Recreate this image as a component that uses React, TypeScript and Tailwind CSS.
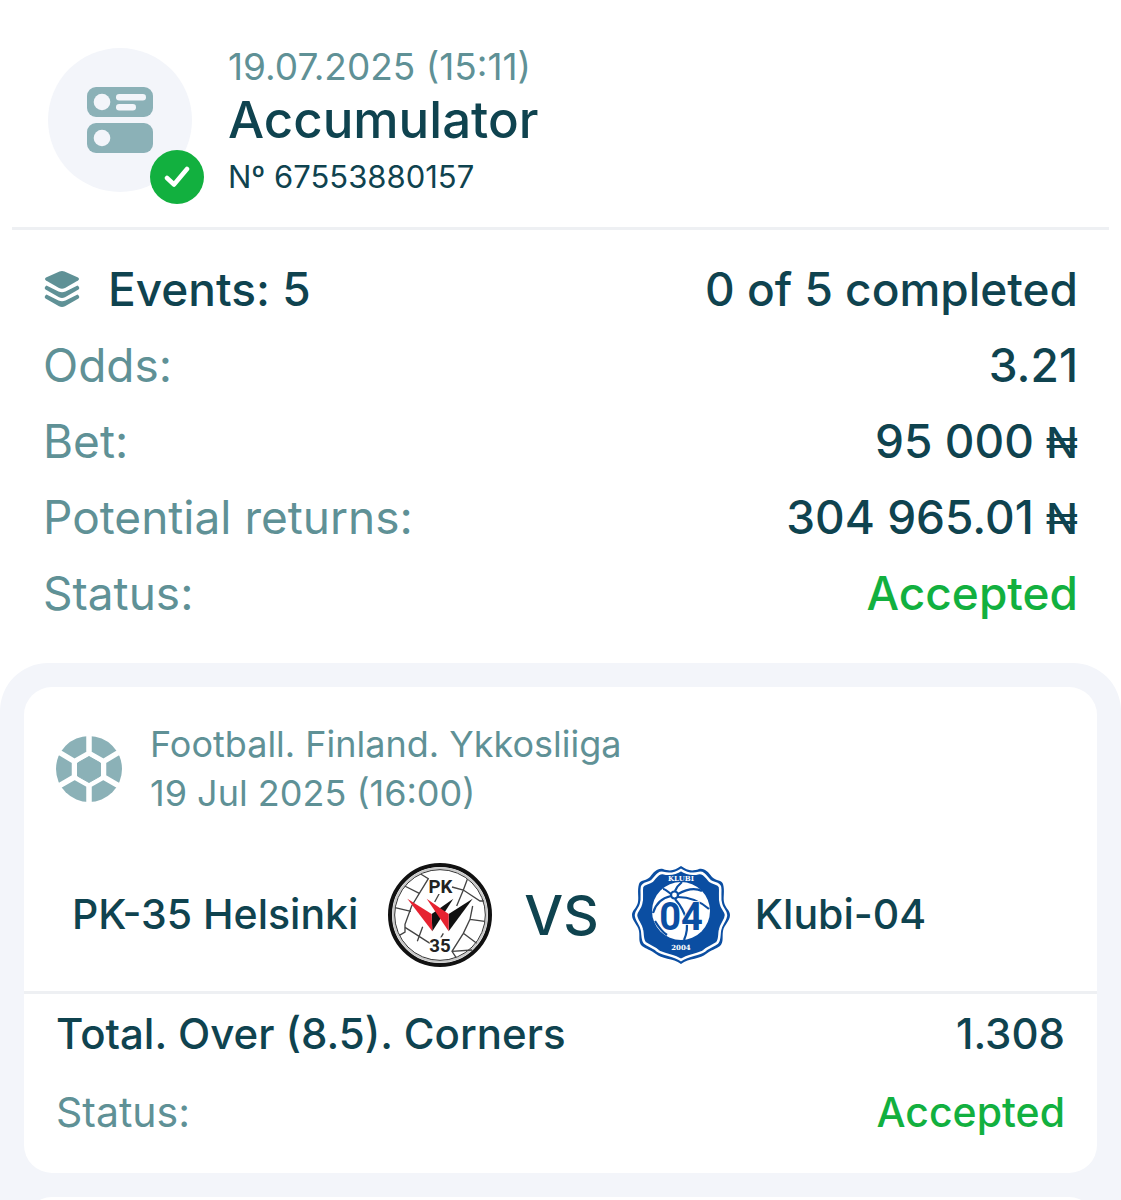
import type { ReactNode } from "react";

type RowProps = {
  label: ReactNode;
  value: ReactNode;
  accent?: boolean;
};

function SummaryRow({ label, value, accent }: RowProps) {
  return (
    <div className="flex items-center justify-between text-[46px] leading-[76px]">
      <dt className="text-[#5f9196]">{label}</dt>
      <dd
        className={
          accent ? "font-medium text-[#12b03f]" : "font-medium text-[#0f434f]"
        }
      >
        {value}
      </dd>
    </div>
  );
}

function Money({ amount }: { amount: string }) {
  return (
    <span className="flex items-baseline gap-3">
      {amount}
      <span className="text-[42px] leading-none">₦</span>
    </span>
  );
}

function CouponIcon() {
  return (
    <svg viewBox="0 0 66 66" className="size-[66px]" aria-hidden="true">
      <rect width="66" height="30" rx="9" fill="#8bb1b7" />
      <rect y="36" width="66" height="30" rx="9" fill="#8bb1b7" />
      <g fill="#f3f5fa">
        <circle cx="15" cy="15" r="8.3" />
        <circle cx="15" cy="51" r="8.3" />
        <rect x="29" y="7" width="30" height="6.5" rx="3.2" />
        <rect x="29" y="17" width="20" height="6.5" rx="3.2" />
      </g>
    </svg>
  );
}

function StackIcon() {
  return (
    <svg
      viewBox="0 0 36 38"
      className="h-[38px] w-9"
      fill="#5f9196"
      aria-hidden="true"
    >
      <path d="M15.5 1.500Q18 .4 20.500 1.500L34 7.500Q36 9 34 10.500L21 18Q18 19.500 15 18L2 10.500Q0 9 2 7.500Z" />
      <path d="M2.500 15.500L14.500 21.500Q18 23 21.500 21.500L33.500 15.500Q36.500 17.500 34.500 19.500L21 27.300Q18 28.800 15 27.300L1.500 19.500Q-.5 17.500 2.500 15.500Z" />
      <path d="M2.500 24.500L14.500 30.500Q18 32 21.500 30.500L33.500 24.500Q36.500 26.500 34.500 28.500L21 36.300Q18 37.800 15 36.300L1.500 28.500Q-.5 26.500 2.500 24.500Z" />
    </svg>
  );
}

function FootballIcon() {
  return (
    <svg
      viewBox="0 0 66 66"
      className="size-[66px] shrink-0"
      aria-hidden="true"
    >
      <circle cx="33" cy="33" r="33" fill="#8bb1b7" />
      <path
        d="M33 17.500L47.500 25.500V41L33 49L18.500 41V25.500ZM33 17.500V-1M47.500 25.500L65 15M47.500 41L65 51M33 49V67M18.500 41L1 51M18.500 25.500L1 15"
        fill="none"
        stroke="#fff"
        strokeWidth="5.500"
      />
      <path
        d="M33 20.500L44.500 27V40L33 46.500L21.500 40V27Z"
        fill="#8bb1b7"
        stroke="#8bb1b7"
        strokeWidth="1"
        strokeLinejoin="round"
      />
    </svg>
  );
}

function PkLogo() {
  return (
    <svg
      viewBox="24 21 312 312"
      className="size-[104px] shrink-0"
      role="img"
      aria-label="PK-35"
    >
      <circle cx="180" cy="177" r="150" fill="#fff" stroke="#111" strokeWidth="12" />
      <circle cx="180" cy="177" r="140" fill="none" stroke="#c9c9c9" strokeWidth="6" />
      <circle cx="180" cy="177" r="136" fill="none" stroke="#333" strokeWidth="3" />
      <g fill="none" stroke="#444" strokeWidth="4">
        <path d="M122 54L145 68L118 112L95 150L75 205V228L58 238" />
        <path d="M74 90L118 112M45 155L93 166M75 214L100 230L150 262M128 212L112 256" />
        <path d="M216 93L250 102L300 135H312M250 102L262 70M250 102L230 150M182 105L164 138" />
        <path d="M278 150L270 190L250 232L216 286L228 304M270 190L314 196M250 232L290 262M216 286L276 282M190 232L176 256" />
      </g>
      <path d="M220 128L155 174L157 226Z" fill="#111" />
      <path d="M278 128L206 174V226Z" fill="#111" />
      <path d="M82 128L155 174L157 226Z" fill="#e62230" />
      <path d="M140 128L206 174V226Z" fill="#e62230" />
      <rect x="148" y="62" width="64" height="52" fill="#fff" />
      <rect x="149" y="244" width="62" height="50" fill="#fff" />
      <g
        fill="#222"
        textAnchor="middle"
        className="font-['Roboto',sans-serif] text-[56px] font-bold"
      >
        <text x="181" y="110">PK</text>
        <text x="180" y="289">35</text>
      </g>
    </svg>
  );
}

function KlubiLogo() {
  return (
    <svg
      viewBox="0 0 100 100"
      className="size-[100px] shrink-0"
      role="img"
      aria-label="Klubi-04"
    >
      <path
        d="M50 1C56 5 60 7 68 4C74 3 77 7 81 12C85 16 91 15 92 19C94 26 92 32 93 37C94 43 99 45 99 50C99 56 93 60 92 66C91 72 93 77 89 81C85 84 80 85 75 89C70 94 58 93 50 99C42 93 30 94 25 89C20 85 15 84 11 81C7 77 9 72 8 66C7 60 1 56 1 50C1 45 6 43 7 37C8 32 6 26 8 19C9 15 15 16 19 12C23 7 26 3 32 4C40 7 44 5 50 1Z"
        fill="#0b4ea2"
      />
      <path
        d="M50 5C56 9 61 10 68 8C73 7 75 12 79 16C83 19 88 18 89 22C90 28 88 33 90 39C91 44 95 46 95 50C95 55 90 59 89 65C88 70 89 75 86 78C82 81 77 82 73 86C67 90 57 90 50 95C43 90 33 90 27 86C23 82 18 81 14 78C11 75 12 70 11 65C10 59 5 55 5 50C5 46 9 44 10 39C12 33 10 28 11 22C12 18 17 19 21 16C25 12 27 7 32 8C39 10 44 9 50 5Z"
        fill="#0b4ea2"
        stroke="#fff"
        strokeWidth="2.500"
      />
      <circle cx="50" cy="46" r="29" fill="#fff" />
      <g fill="none" stroke="#0b4ea2" strokeWidth="2.200">
        <circle cx="43.500" cy="30" r="3.500" />
        <path d="M44 26Q46 21 51 17M47 29Q61 21 71 26M47 32Q64 32 78 44M40 29Q34 24 32 24M40 31Q26 34 22 48M44 34Q62 55 53 75M24 56Q30 66 36 70" />
      </g>
      <text
        x="50"
        y="65"
        textAnchor="middle"
        fill="#0b4ea2"
        stroke="#fff"
        strokeWidth="1.500"
        paintOrder="stroke"
        className="font-['Roboto',sans-serif] text-[38px] font-bold"
      >
        04
      </text>
      <g
        fill="#fff"
        textAnchor="middle"
        className="font-['DejaVu_Serif',serif] text-[7px] font-bold"
      >
        <text x="50" y="16">KLUBI</text>
        <text x="50" y="85">2004</text>
      </g>
    </svg>
  );
}

export default function App() {
  return (
    <div className="flex h-screen flex-col overflow-hidden bg-white font-['Inter','Liberation_Sans',sans-serif] text-[#0f434f]">
      <header className="mx-3 flex gap-9 border-b-3 border-[#eef0f3] pt-12 pb-7 pl-9">
        <div className="relative flex size-36 shrink-0 items-center justify-center rounded-full bg-[#f3f5fa]">
          <CouponIcon />
          <span className="absolute -right-3 -bottom-3 flex size-[54px] items-center justify-center rounded-full bg-[#12b03f]">
            <svg viewBox="0 0 26 22" className="h-[22px] w-[26px]" aria-hidden="true">
              <path
                d="M3 12L10 18.500L23 3"
                fill="none"
                stroke="#fff"
                strokeWidth="4.500"
                strokeLinecap="round"
                strokeLinejoin="round"
              />
            </svg>
          </span>
        </div>
        <div>
          <p className="text-[37px] leading-[38px] text-[#5f9196]">
            19.07.2025 (15:11)
          </p>
          <h1 className="text-[51px] leading-[68px] font-medium">Accumulator</h1>
          <p className="text-[31px] leading-[45px]">Nº 67553880157</p>
        </div>
      </header>

      <section className="px-[43px] pt-[21px] pb-8">
        <dl>
          <SummaryRow
            label={
              <span className="flex items-center gap-7 pl-px font-medium text-[#0f434f]">
                <StackIcon />
                Events: 5
              </span>
            }
            value="0 of 5 completed"
          />
          <SummaryRow label="Odds:" value="3.21" />
          <SummaryRow label="Bet:" value={<Money amount="95 000" />} />
          <SummaryRow
            label="Potential returns:"
            value={<Money amount="304 965.01" />}
          />
          <SummaryRow label="Status:" value="Accepted" accent />
        </dl>
      </section>

      <main className="flex flex-1 flex-col gap-6 rounded-t-[48px] bg-[#f3f5fa] p-6">
        <article className="shrink-0 rounded-[28px] bg-white">
          <div className="flex items-center gap-7 px-8 pt-[33px]">
            <FootballIcon />
            <p className="text-[36px] leading-[49px] text-[#5f9196]">
              Football. Finland. Ykkosliiga
              <br />
              19 Jul 2025 (16:00)
            </p>
          </div>
          <div className="flex items-center border-b-3 border-[#eef0f3] px-12 pt-[45px] pb-6 text-[41px] font-medium">
            <span>PK-35 Helsinki</span>
            <span className="ml-[30px] flex">
              <PkLogo />
            </span>
            <span className="mx-8 text-[55px]">VS</span>
            <KlubiLogo />
            <span className="ml-6">Klubi-04</span>
          </div>
          <dl className="px-8 pt-px pb-[22px] text-[41px] leading-[78px]">
            <div className="flex justify-between text-[42px] font-medium">
              <dt>Total. Over (8.5). Corners</dt>
              <dd>1.308</dd>
            </div>
            <div className="flex justify-between">
              <dt className="text-[#5f9196]">Status:</dt>
              <dd className="font-medium text-[#12b03f]">Accepted</dd>
            </div>
          </dl>
        </article>
        <article className="h-16 shrink-0 rounded-[28px] bg-white" />
      </main>
    </div>
  );
}
